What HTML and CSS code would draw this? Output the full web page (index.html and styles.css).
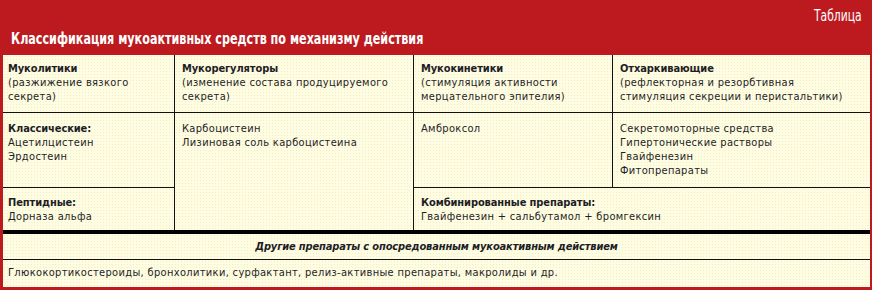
FILE: index.html
```html
<!DOCTYPE html>
<html lang="ru">
<head>
<meta charset="utf-8">
<link rel="stylesheet" href="styles.css">
</head>
<body>
<div class="page">
  <header class="head">
    <div class="tag"><span class="tag-text">Таблица</span></div>
    <h1 class="title"><span class="title-text">Классификация мукоактивных средств по механизму действия</span></h1>
  </header>
  <div class="sheet">
    <div class="grid">
      <div class="cell r1 first"><b>Муколитики</b><br>(разжижение вязкого<br>секрета)</div>
      <div class="cell r1"><b>Мукорегуляторы</b><br>(изменение состава продуцируемого<br>секрета)</div>
      <div class="cell r1"><b>Мукокинетики</b><br>(стимуляция активности<br>мерцательного эпителия)</div>
      <div class="cell r1"><b>Отхаркивающие</b><br>(рефлекторная и резорбтивная<br>стимуляция секреции и перистальтики)</div>
      <div class="cell r2 first"><b>Классические:</b><br>Ацетилцистеин<br>Эрдостеин</div>
      <div class="cell r2 span-rows">Карбоцистеин<br>Лизиновая соль карбоцистеина</div>
      <div class="cell r2">Амброксол</div>
      <div class="cell r2">Секретомоторные средства<br>Гипертонические растворы<br>Гвайфенезин<br>Фитопрепараты</div>
      <div class="cell r3 first"><b>Пептидные:</b><br>Дорназа альфа</div>
      <div class="cell r3 span-cols"><b>Комбинированные препараты:</b><br>Гвайфенезин + сальбутамол + бромгексин</div>
    </div>
    <div class="thick"></div>
    <div class="other">Другие препараты с опосредованным мукоактивным действием</div>
    <div class="rest">Глюкокортикостероиды, бронхолитики, сурфактант, релиз-активные препараты, макролиды и др.</div>
  </div>
</div>
</body>
</html>
```

FILE: styles.css
```css
* { box-sizing: border-box; margin: 0; padding: 0; }
html, body { width: 872px; height: 290px; overflow: hidden; }
body { background: #bd1a20; font-family: "DejaVu Sans Condensed", "DejaVu Sans", sans-serif; color: #1e1e26; }
.page { width: 872px; height: 290px; display: flex; flex-direction: column; }
.head { height: 55px; color: #fff; }
.tag { text-align: right; padding: 8px 10px 0 0; font-size: 15px; line-height: 16px; height: 24px; white-space: nowrap; }
.tag-text { display: inline-block; transform: scaleX(0.8); transform-origin: 100% 0; }
.title { font-size: 16.5px; font-weight: bold; line-height: 18px; padding: 6px 0 0 11px; white-space: nowrap; }
.title-text { display: inline-block; transform: scaleX(0.753); transform-origin: 0 0; }
.sheet { margin: 0 2px 0 3px; height: 232px; display: flex; flex-direction: column; }
.cell, .other, .rest {
  background-color: #fefde2;
  background-image: radial-gradient(circle, #f1edc8 0.7px, transparent 0.9px);
  background-size: 3px 3px;
}
.grid {
  display: grid;
  grid-template-columns: 171px 238px 198px 257px;
  grid-template-rows: 57px 74px 42px;
  gap: 1px;
  background: #111;
}
.cell { font-size: 11px; line-height: 14px; letter-spacing: 0.33px; padding: 8px 6px 0 7px; white-space: nowrap; }
.cell.first { padding-left: 5px; }
.cell.r1 { padding-top: 7px; }
.cell.r2 { padding-top: 9px; }
.cell.r3 { padding-top: 8px; }
.cell b { letter-spacing: -0.1px; }
.span-rows { grid-row: 2 / 4; grid-column: 2; }
.span-cols { grid-column: 3 / 5; }
.thick { height: 4px; background: #000; }
.other { height: 26px; border-bottom: 1px solid #111; font-size: 11px; line-height: 14px; font-weight: bold; font-style: italic; letter-spacing: -0.15px; padding-top: 6px; text-align: center; white-space: nowrap; }
.rest { height: 27px; font-size: 11px; line-height: 14px; letter-spacing: 0.33px; padding: 6px 0 0 5px; white-space: nowrap; }
```
